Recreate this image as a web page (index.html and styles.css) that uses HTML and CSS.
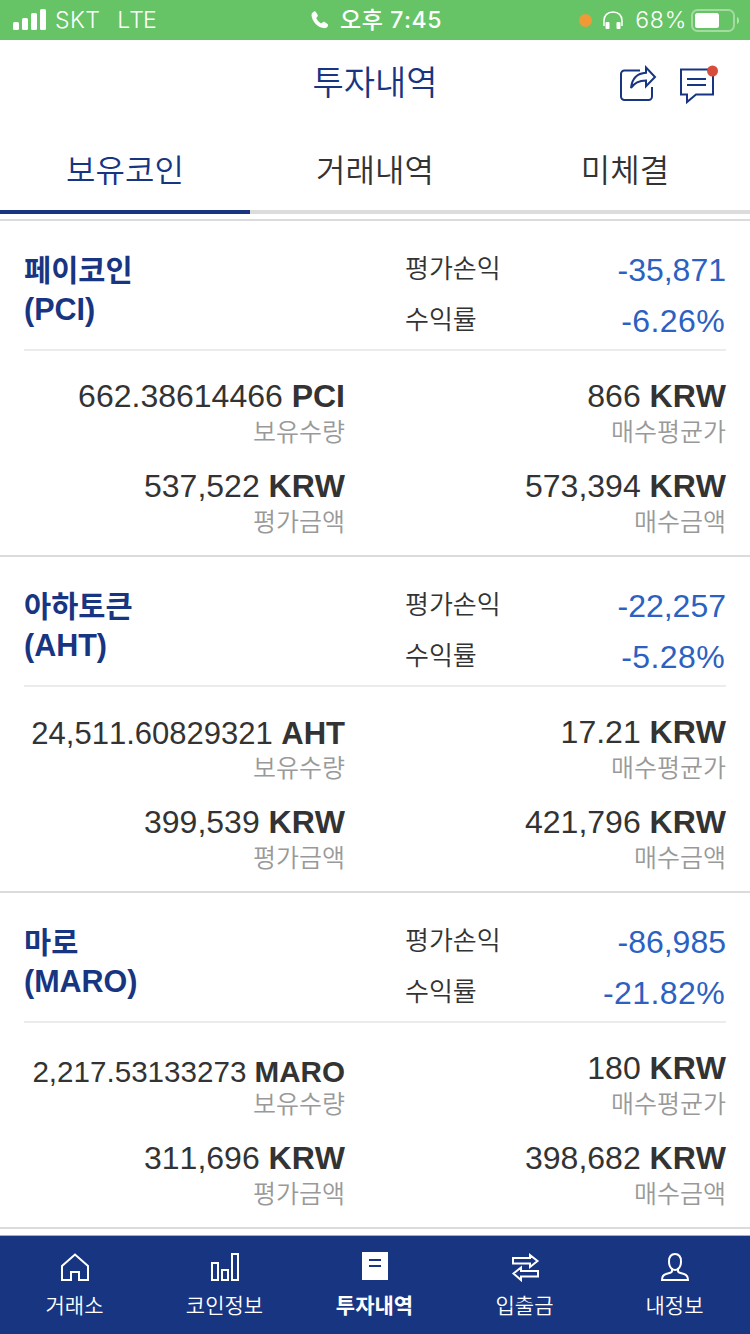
FILE: index.html
```html
<!DOCTYPE html>
<html lang="ko">
<head>
  <meta charset="UTF-8">
  <meta name="viewport" content="width=device-width, initial-scale=1.0">
  <title>투자내역</title>
  <link rel="stylesheet" href="styles.css">
</head>
<body>
  <div class="app">
    <div class="status-bar">
      <div class="status-left">
        <svg width="34" height="22" viewBox="0 0 34 22" fill="#fff">
          <rect x="0" y="13" width="6" height="8" rx="1.5"/>
          <rect x="9" y="9" width="6" height="12" rx="1.5"/>
          <rect x="18" y="4" width="6" height="17" rx="1.5"/>
          <rect x="27" y="0" width="6" height="21" rx="1.5"/>
        </svg>
        <span class="carrier">SKT</span>
        <span class="network">LTE</span>
      </div>
      <div class="status-center">
        <svg width="18" height="18" viewBox="0 0 18 18" fill="#fff">
          <path d="M3.200.4C1.200 1 .2 2.800.6 5c1 5.800 6 11.200 11.800 12.100 2 .3 3.800-.6 4.500-2.200.3-.8.2-1.400-.4-1.900l-2.800-2c-.7-.5-1.400-.4-2 .2l-.9.9c-.3.3-.7.300-1.100.1C8 11 6.500 9.400 5.500 7.700c-.2-.4-.2-.8.1-1.100l.8-.9c.5-.6.6-1.200.2-1.900L4.900 1C4.500.4 3.900.2 3.200.4z"/>
        </svg>
        <span class="clock">오후 7:45</span>
      </div>
      <div class="status-right">
        <span class="mic-dot"></span>
        <svg width="20" height="19" viewBox="0 0 20 19">
          <path d="M1 15V9.500C1 4.500 4.500 1 10 1s9 3.500 9 8.500V15" fill="none" stroke="#fff" stroke-width="1.500"/>
          <rect x="2.500" y="11" width="4" height="7" rx="1" fill="#fff"/>
          <rect x="13.500" y="11" width="4" height="7" rx="1" fill="#fff"/>
        </svg>
        <span class="percent">68%</span>
        <svg width="48" height="23" viewBox="0 0 48 23">
          <rect x="1" y="1" width="42" height="21" rx="5.500" fill="none" stroke="#fff" stroke-opacity=".4" stroke-width="2"/>
          <rect x="4" y="4" width="24" height="15" rx="2.500" fill="#fff"/>
          <path d="M46 8c1.300.6 2 1.800 2 3.500s-.7 2.900-2 3.500z" fill="#fff" fill-opacity=".5"/>
        </svg>
      </div>
    </div>

    <header class="header">
      <h1 class="title">투자내역</h1>
      <div class="actions">
        <svg width="37" height="36" viewBox="0 0 37 36" fill="none" stroke="#183582" stroke-width="2">
          <path d="M20 5.500H4.500a3.500 3.500 0 0 0-3.500 3.500v22.500a3.500 3.500 0 0 0 3.500 3.500h24a3.500 3.500 0 0 0 3.500-3.500V22"/>
          <path d="M26 2.500l9 9.500-9 9.300v-5.800c-6.500 0-11.500 2-15 7.500 1-9.500 6.500-14.700 15-15.200z"/>
        </svg>
        <svg width="38" height="38" viewBox="0 0 38 38">
          <path d="M1 4.500h32v25H16l-9 7.500v-7.500H1z" fill="none" stroke="#183582" stroke-width="2"/>
          <path d="M7 14h19M7 20h19" stroke="#183582" stroke-width="2"/>
          <circle cx="32.500" cy="6" r="5.500" fill="#d84c3c"/>
        </svg>
      </div>
    </header>

    <nav class="tabs">
      <a class="tab active">보유코인</a>
      <a class="tab">거래내역</a>
      <a class="tab">미체결</a>
    </nav>

    <main class="coin-list">
      <section class="coin">
        <div class="coin-head">
          <h2 class="coin-name">페이코인<br><span class="symbol">(PCI)</span></h2>
          <div class="profit">
            <div class="profit-row"><span>평가손익</span><span class="down">-35,871</span></div>
            <div class="profit-row"><span>수익률</span><span class="down rate">-6.26%</span></div>
          </div>
        </div>
        <div class="coin-body">
          <div class="cell"><p class="amount">662.38614466 <b>PCI</b></p><p class="label">보유수량</p></div>
          <div class="cell"><p class="amount">866 <b>KRW</b></p><p class="label">매수평균가</p></div>
          <div class="cell"><p class="amount">537,522 <b>KRW</b></p><p class="label">평가금액</p></div>
          <div class="cell"><p class="amount">573,394 <b>KRW</b></p><p class="label">매수금액</p></div>
        </div>
      </section>

      <section class="coin">
        <div class="coin-head">
          <h2 class="coin-name">아하토큰<br><span class="symbol">(AHT)</span></h2>
          <div class="profit">
            <div class="profit-row"><span>평가손익</span><span class="down">-22,257</span></div>
            <div class="profit-row"><span>수익률</span><span class="down rate">-5.28%</span></div>
          </div>
        </div>
        <div class="coin-body">
          <div class="cell"><p class="amount long">24,511.60829321 <b>AHT</b></p><p class="label">보유수량</p></div>
          <div class="cell"><p class="amount">17.21 <b>KRW</b></p><p class="label">매수평균가</p></div>
          <div class="cell"><p class="amount">399,539 <b>KRW</b></p><p class="label">평가금액</p></div>
          <div class="cell"><p class="amount">421,796 <b>KRW</b></p><p class="label">매수금액</p></div>
        </div>
      </section>

      <section class="coin">
        <div class="coin-head">
          <h2 class="coin-name">마로<br><span class="symbol">(MARO)</span></h2>
          <div class="profit">
            <div class="profit-row"><span>평가손익</span><span class="down">-86,985</span></div>
            <div class="profit-row"><span>수익률</span><span class="down rate">-21.82%</span></div>
          </div>
        </div>
        <div class="coin-body">
          <div class="cell"><p class="amount longer">2,217.53133273 <b>MARO</b></p><p class="label">보유수량</p></div>
          <div class="cell"><p class="amount">180 <b>KRW</b></p><p class="label">매수평균가</p></div>
          <div class="cell"><p class="amount">311,696 <b>KRW</b></p><p class="label">평가금액</p></div>
          <div class="cell"><p class="amount">398,682 <b>KRW</b></p><p class="label">매수금액</p></div>
        </div>
      </section>
    </main>

    <nav class="bottom-nav">
      <a class="nav-item">
        <svg width="28" height="28" viewBox="0 0 28 28" fill="none" stroke="#fff" stroke-width="2">
          <path d="M1 27V13L14 1.500 27 13v14h-9v-8h-8v8z"/>
        </svg>
        <span>거래소</span>
      </a>
      <a class="nav-item">
        <svg width="28" height="28" viewBox="0 0 28 28" fill="none" stroke="#fff" stroke-width="2">
          <path d="M1 10h6v17H1zM11 17h6v10h-6zM21 1h6v26h-6z"/>
        </svg>
        <span>코인정보</span>
      </a>
      <a class="nav-item active">
        <svg width="28" height="28" viewBox="0 0 28 28">
          <path d="M1 -1h26v28H1z" fill="#fff"/>
          <path d="M8 7h12M8 13h12" stroke="#183582" stroke-width="2"/>
        </svg>
        <span>투자내역</span>
      </a>
      <a class="nav-item">
        <svg width="28" height="28" viewBox="0 0 28 28" fill="none" stroke="#fff" stroke-width="2">
          <path d="M2 5h17V2l7.500 6-7.500 6v-3.500H2zM27 23.500H10V27l-7.500-6.500L10 14.500V18h17z"/>
        </svg>
        <span>입출금</span>
      </a>
      <a class="nav-item">
        <svg width="28" height="28" viewBox="0 0 28 28" fill="none" stroke="#fff" stroke-width="2">
          <path d="M14 1c-4 0-6 3-6 7.500 0 3.500 1 6 3 7.500v2c0 1-1 1.600-2.500 2L5 21c-3 .8-4 2.500-4 6h26c0-3.500-1-5.200-4-6l-3.500-1c-1.500-.4-2.500-1-2.500-2v-2c2-1.500 3-4 3-7.500C20 4 18 1 14 1z"/>
          <path d="M10.500 15.500c2 2 5 2 7 0"/>
        </svg>
        <span>내정보</span>
      </a>
    </nav>
  </div>
</body>
</html>
```

FILE: styles.css
```css
* {
  box-sizing: border-box;
  margin: 0;
  padding: 0;
}
body {
  background: #fff;
  color: #333;
  font-family: "Liberation Sans", "Noto Sans CJK KR", sans-serif;
  font-weight: 350;
  font-kerning: none;
}
svg {
  display: block;
  overflow: visible;
}
.app {
  display: flex;
  flex-direction: column;
  width: 750px;
  height: 1334px;
  overflow: hidden;
}

/* status bar */
.status-bar {
  display: flex;
  align-items: center;
  height: 40px;
  padding: 0 11px 0 13px;
  background: #66c466;
  color: #fff;
  font-family: Inter, "Noto Sans CJK KR", sans-serif;
  font-size: 23px;
  line-height: 40px;
}
.status-left,
.status-center,
.status-right {
  display: flex;
  align-items: center;
}
.status-left {
  width: 298px;
  font-weight: 350;
}
.carrier {
  margin-left: 8px;
  letter-spacing: 0.4px;
}
.network {
  margin-left: 17px;
  letter-spacing: -0.9px;
}
.status-center {
  gap: 11px;
  font-weight: 500;
}
.clock {
  letter-spacing: 0.6px;
}
.status-right {
  margin-left: auto;
  font-weight: 350;
}
.mic-dot {
  width: 13px;
  height: 13px;
  margin-right: 11px;
  border-radius: 50%;
  background: #f09a37;
}
.percent {
  margin: 0 4px 0 12px;
  letter-spacing: 0.8px;
}

/* header */
.header {
  display: grid;
  grid-template-columns: 1fr auto 1fr;
  align-items: center;
  height: 88px;
  padding: 0 32px;
}
.title {
  grid-column: 2;
  padding-bottom: 7px;
  color: #183582;
  font-size: 34px;
  font-weight: 350;
}
.actions {
  display: flex;
  justify-content: flex-end;
  gap: 23px;
}

/* tabs */
.tabs {
  display: flex;
  height: 86px;
  margin-bottom: 5px;
}
.tab {
  flex: 1;
  border-bottom: 4px solid #dcdcdc;
  font-size: 32px;
  line-height: 86px;
  text-align: center;
}
.tab.active {
  border-color: #183582;
  color: #183582;
}

/* coins */
.coin-list {
  flex: 1;
  border-bottom: 2px solid #dcdcdc;
}
.coin {
  height: 336px;
  border-top: 2px solid #dcdcdc;
}
.coin-head {
  display: flex;
  justify-content: space-between;
  height: 130px;
  margin: 0 24px;
  border-bottom: 2px solid #ececec;
}
.coin-name {
  padding-top: 31px;
  color: #183582;
  font-size: 29.5px;
  line-height: 38px;
}
.coin-name .symbol {
  font-size: 30.5px;
}
.profit {
  width: 321px;
  padding-top: 23px;
}
.profit-row {
  display: flex;
  justify-content: space-between;
  font-size: 26px;
  line-height: 51px;
}
.profit-row .down {
  padding-top: 1px;
  color: #2b61c1;
  font-size: 32px;
  line-height: 50px;
}
.profit-row .rate {
  padding-right: 1px;
  letter-spacing: 0.4px;
}
.coin-body {
  display: grid;
  grid-template-columns: 345px 381px;
  grid-auto-rows: 90px;
  padding-top: 25px;
  text-align: right;
}
.amount {
  height: 40px;
  font-size: 32px;
  line-height: 40px;
  white-space: nowrap;
}
.amount.long {
  font-size: 31px;
  line-height: 43px;
}
.amount.longer {
  font-size: 29.6px;
  line-height: 47px;
}
.label {
  color: #999;
  font-size: 25px;
  line-height: 32px;
}

/* bottom menu */
.bottom-nav {
  display: flex;
  height: 99px;
  margin-top: 6px;
  border-top: 1px solid #a9b0b0;
  background: #183582;
  color: #fff;
}
.nav-item {
  display: flex;
  flex: 1;
  flex-direction: column;
  align-items: center;
  padding: 17px 1px 0 0;
  font-size: 21px;
  line-height: 30px;
}
.nav-item span {
  margin-top: 10px;
}
.nav-item.active {
  font-weight: 700;
}
```
